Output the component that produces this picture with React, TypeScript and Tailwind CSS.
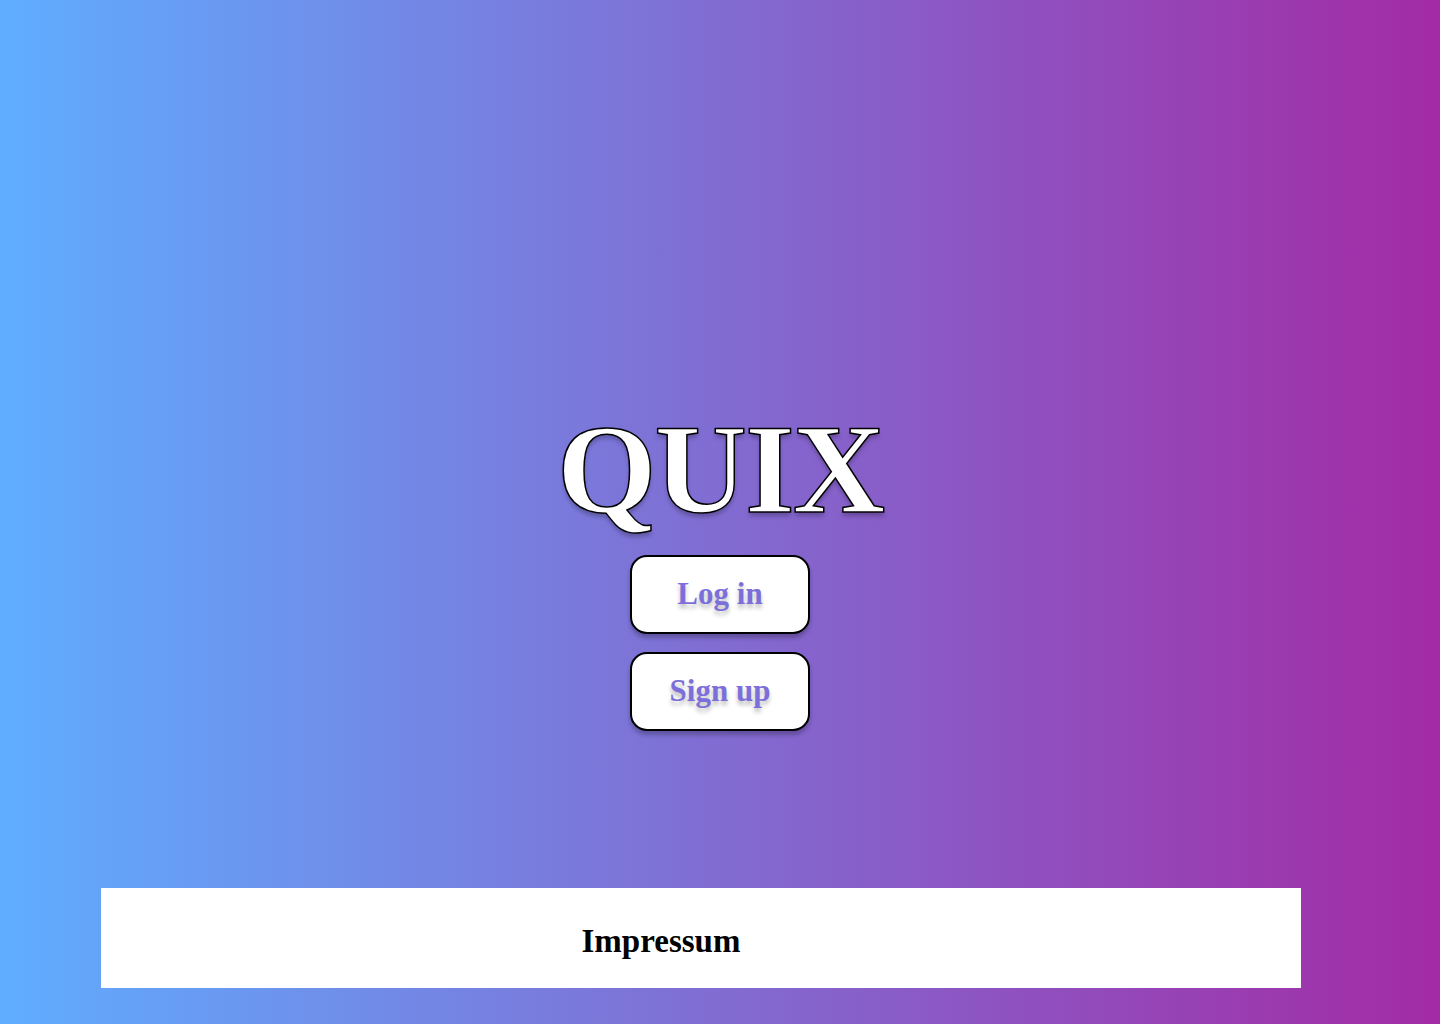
const serif = { fontFamily: '"Liberation Serif", "DejaVu Serif", serif' };

function NavButton({ label }: { label: string }) {
    return (
        <button
            className="w-[180px] h-[79px] bg-white border-2 border-black rounded-[17px] shadow-[0_4px_4px_rgba(0,0,0,0.25)] text-[31px] font-bold text-[#7d6fda] [text-shadow:0_4px_4px_rgba(0,0,0,0.25)]"
            style={serif}
        >
            {label}
        </button>
    );
}

export default function App() {
    return (
        <div className="w-full h-screen flex flex-col bg-[linear-gradient(to_right,#5fadff,#a32ba5)] overflow-hidden">
            <main className="flex-1 flex flex-col items-center pt-[405px] gap-[18px]">
                <h1
                    className="text-[128px] font-bold leading-none text-white tracking-[-2px] mb-[4px] [-webkit-text-stroke:1.5px_black] [text-shadow:0_4px_4px_rgba(0,0,0,0.25)]"
                    style={serif}
                >
                    QUIX
                </h1>
                <NavButton label="Log in" />
                <NavButton label="Sign up" />
            </main>
            <footer className="ml-[101px] mb-[36px] w-[1200px] h-[100px] bg-white flex items-center justify-center pr-[80px] pt-[8px]">
                <a className="text-[33px] font-bold text-black" style={serif}>
                    Impressum
                </a>
            </footer>
        </div>
    );
}
